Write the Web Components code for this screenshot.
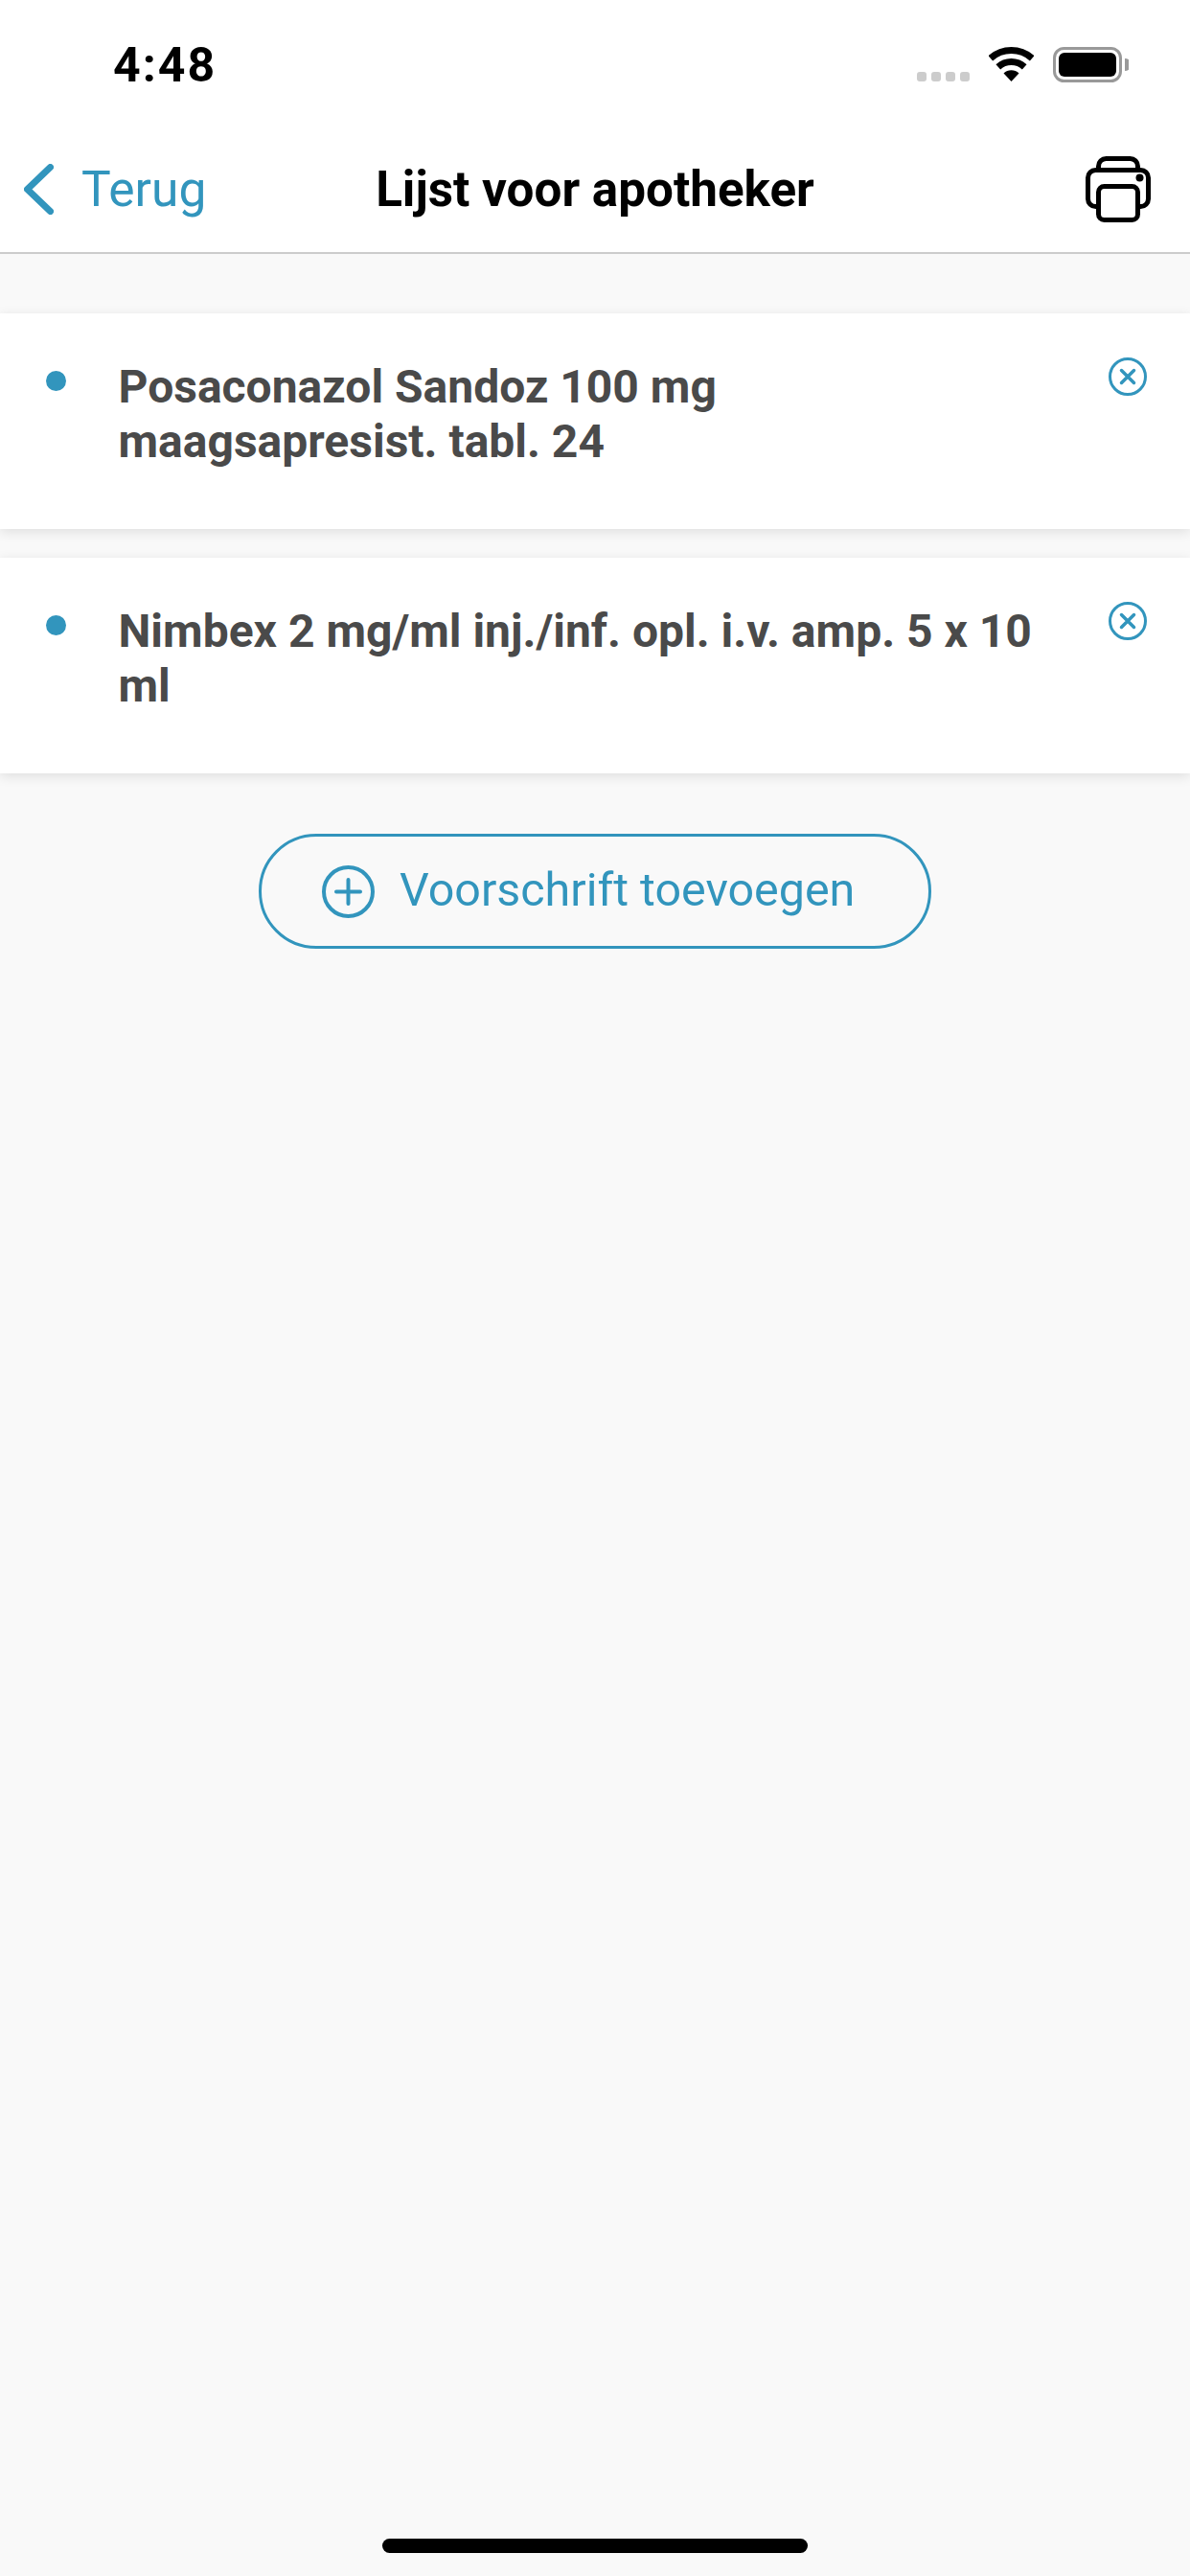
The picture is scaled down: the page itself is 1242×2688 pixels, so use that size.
<!DOCTYPE html>
<html lang="nl"><head><meta charset="utf-8"><title>Lijst voor apotheker</title>
<style>html,body{margin:0;padding:0;background:#f9f9f9;font-family:Roboto,"Liberation Sans",sans-serif}</style>
</head><body>
<app-screen>
  <status-bar time="4:48"></status-bar>
  <nav-bar back="Terug" title-text="Lijst voor apotheker"></nav-bar>
  <med-list>
    <med-card>Posaconazol Sandoz 100 mg<br>maagsapresist. tabl. 24</med-card>
    <med-card>Nimbex 2 mg/ml inj./inf. opl. i.v. amp. 5 x 10<br>ml</med-card>
    <add-button>Voorschrift toevoegen</add-button>
  </med-list>
  <home-indicator></home-indicator>
</app-screen>
<script>
function def(name, html, init){
  customElements.define(name, class extends HTMLElement{
    constructor(){super();const r=this.attachShadow({mode:'open'});r.innerHTML=html;}
    connectedCallback(){ if(init) init(this); }
  });
}
def('app-screen',`<style>:host{display:flex;flex-direction:column;width:1242px;height:2688px;background:#f9f9f9;overflow:hidden}</style><slot></slot>`);
def('status-bar',`<style>
:host{display:flex;align-items:flex-start;justify-content:space-between;height:132px;box-sizing:border-box;padding:0 64px 0 118px;background:#fff;color:#000}
#t{font:700 50px/48px Roboto,sans-serif;letter-spacing:2px;margin-top:44px}
.r{display:flex;align-items:flex-start;margin-top:49px}
.dots{display:flex;gap:5px;margin-top:26px;margin-right:20px}
.dots i{display:block;width:10px;height:10px;border-radius:3px;background:#ccc}
.wifi{display:block;margin-right:20px}
.bat{display:block}
</style><div id="t"></div><div class="r">
<div class="dots"><i></i><i></i><i></i><i></i></div>
<svg class="wifi" width="47" height="37" viewBox="0 0 47 37"><g fill="none" stroke="#000" stroke-width="7"><path d="M1.8 11.85A32.5 32.5 0 0 1 45.2 11.85"/><path d="M9.8 20.8A20.5 20.5 0 0 1 37.2 20.8"/></g><path d="M23.5 36L15.5 27.5A11.5 11.5 0 0 1 31.5 27.5Z" fill="#000"/></svg>
<svg class="bat" width="79" height="37" viewBox="0 0 79 37"><rect x="1.5" y="1.5" width="69" height="34" rx="10" fill="#fff" stroke="#999" stroke-width="3"/><rect x="6" y="6" width="60" height="25" rx="6" fill="#000"/><path d="M75 12a6 6 0 0 1 0 13z" fill="#999"/></svg>
</div>`,el=>{el.shadowRoot.getElementById('t').textContent=el.getAttribute('time');});
def('nav-bar',`<style>
:host{display:grid;grid-template-columns:1fr auto 1fr;align-items:center;height:133px;box-sizing:border-box;padding:0 41px;background:#fff;border-bottom:2px solid #ccc}
.back{display:flex;align-items:center;gap:29px;margin-left:-16px;color:#3295bd;font:400 51.5px/60px Roboto,sans-serif}
h1{margin:0;font:700 51.2px/60px Roboto,sans-serif;color:#000}
.act{justify-self:end;display:block}
svg{display:block}
</style>
<div class="back"><svg width="31" height="53" viewBox="0 0 31 53"><path d="M27.5 3.5L3.5 26.5L27.5 49.5" fill="none" stroke="#3295bd" stroke-width="7" stroke-linecap="round" stroke-linejoin="round"/></svg><span id="b"></span></div>
<h1 id="h"></h1>
<svg class="act" width="68" height="69" viewBox="0 0 68 69" fill="none" stroke="#000" stroke-width="5"><path d="M13.5 52.5H10.5a8 8 0 0 1-8-8V22.5a8 8 0 0 1 8-8h47a8 8 0 0 1 8 8V44.5a8 8 0 0 1-8 8H54.500"/><path d="M13.5 14V10.5a8 8 0 0 1 8-8h25a8 8 0 0 1 8 8V14"/><rect x="13.5" y="31.500" width="41" height="35" rx="6"/><circle cx="56.500" cy="22.500" r="4" fill="#000" stroke="none"/></svg>`,
el=>{el.shadowRoot.getElementById('b').textContent=el.getAttribute('back');el.shadowRoot.getElementById('h').textContent=el.getAttribute('title-text');});
def('med-list',`<style>:host{display:flex;flex-direction:column;gap:30px;padding-top:62px;flex:1}</style><slot></slot>`);
def('med-card',`<style>
:host{display:flex;align-items:flex-start;height:225px;box-sizing:border-box;padding:48px 45px 0 48px;background:#fff;box-shadow:0 3px 12px rgba(0,0,0,.11);color:#4a4a4a}
.dot{flex:none;width:21px;height:21px;border-radius:50%;background:#3295bd;margin-top:12px}
.txt{flex:1;margin-left:54.500px;font:700 48px/57px Roboto,sans-serif}
svg{display:block;flex:none}
</style><div class="dot"></div><div class="txt"><slot></slot></div>
<svg width="40" height="40" viewBox="0 0 40 40" fill="none" stroke="#3295bd" style="margin-top:-2px"><circle cx="20" cy="20" r="18.500" stroke-width="3"/><path d="M13.500 13.500L26.500 26.500M26.500 13.500L13.500 26.500" stroke-width="3.500" stroke-linecap="round"/></svg>`);
def('add-button',`<style>
:host{display:flex;align-items:center;align-self:center;width:702px;height:120px;box-sizing:border-box;margin-top:33px;padding-left:63px;gap:26px;border:3px solid #3295bd;border-radius:60px;color:#3295bd;font:400 48.4px/60px Roboto,sans-serif}
svg{display:block;flex:none}
span{padding-bottom:2px}
</style><svg width="55" height="55" viewBox="0 0 55 55" fill="none" stroke="#3295bd"><circle cx="27.500" cy="27.500" r="25.500" stroke-width="4"/><path d="M27.500 15V40M15 27.500H40" stroke-width="4" stroke-linecap="round"/></svg><span><slot></slot></span>`);
def('home-indicator',`<style>:host{display:flex;justify-content:center;padding-bottom:24px}i{display:block;width:444px;height:15px;border-radius:8px;background:#000}</style><i></i>`);
</script>
</body></html>
